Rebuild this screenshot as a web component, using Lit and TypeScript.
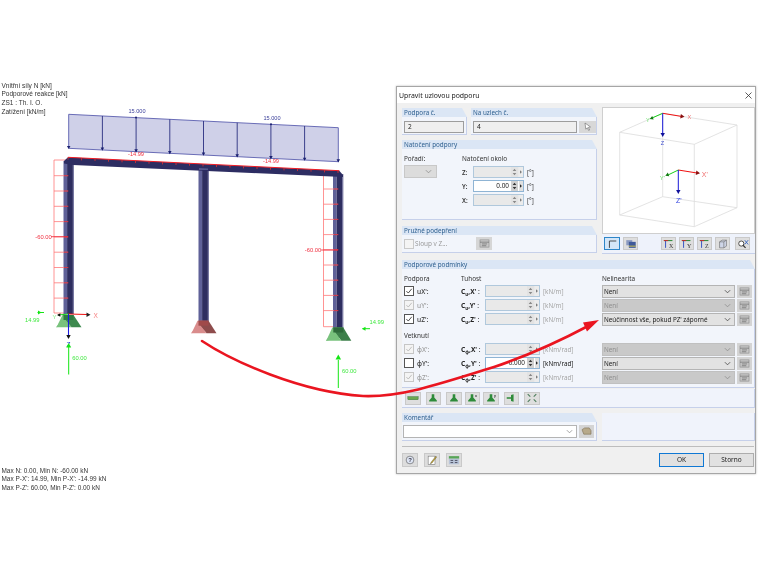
import { LitElement, html, css, svg, nothing } from "lit";
import { customElement } from "lit/decorators.js";

const gridIcon = html`<svg class="ico" viewBox="0 0 12 10"><rect x="1" y="1" width="10" height="8" fill="#c9c9c9" stroke="#8a8a8a" stroke-width=".7"/><path d="M1 3.5h10M3 5.5h6M3 7.5h5" stroke="#666" stroke-width=".8"/></svg>`;

const spinner = (on: boolean) => html`<span class="spin ${on ? "on" : ""}"><svg viewBox="0 0 7 11"><path d="M3.5 2 1.5 4.3h4zM3.5 9 1.5 6.7h4z" fill="${on ? "#333" : "#888"}"/></svg></span><span class="step ${on ? "on" : ""}"><svg viewBox="0 0 4 11"><path d="M1 3.6 3 5.5 1 7.4z" fill="${on ? "#222" : "#777"}"/></svg></span>`;

const num = (value: string, on: boolean, cls = "") => html`<span class="num ${on ? "on" : ""} ${cls}"><span class="numval">${value}</span>${spinner(on)}</span>`;

const chevron = (dim: boolean) => html`<svg class="chev" viewBox="0 0 8 5"><path d="M1 1 4 4 7 1" fill="none" stroke="${dim ? "#8c8c8c" : "#444"}" stroke-width=".9"/></svg>`;

const tool = (icon: unknown, extra = "") => html`<span class="tool ${extra}">${icon}</span>`;

const g = "#2e8b3a";
const support = (x = "") => html`<svg class="ico2" viewBox="0 0 14 11"><path d="M5.5 1h3v4l3 3.5v1h-9v-1l3-3.5z" fill="${g}"/>${x ? svg`<text x="10.5" y="4" font-size="4" font-weight="700" fill="#222" font-family="Liberation Sans">${x}</text>` : nothing}</svg>`;

type Row = { lab: string; state: "on" | "off" | "dim"; c: string; unit: string; val: string; sel: string; selOn: boolean; numOn?: boolean };

const trans: Row[] = [
  { lab: "uX':", state: "on", c: "u", unit: "[kN/m]", val: "", sel: "Není", selOn: true },
  { lab: "uY':", state: "dim", c: "u", unit: "[kN/m]", val: "", sel: "Není", selOn: false },
  { lab: "uZ':", state: "on", c: "u", unit: "[kN/m]", val: "", sel: "Neúčinnost vše, pokud PZ' záporné", selOn: true },
];
const rot: Row[] = [
  { lab: "φX':", state: "dim", c: "φ", unit: "[kNm/rad]", val: "", sel: "Není", selOn: false },
  { lab: "φY':", state: "off", c: "φ", unit: "[kNm/rad]", val: "0.000", sel: "Není", selOn: true, numOn: true },
  { lab: "φZ':", state: "dim", c: "φ", unit: "[kNm/rad]", val: "", sel: "Není", selOn: false },
];
const axes = ["X'", "Y'", "Z'"];

const box = (state: string) => html`<span class="cb ${state}">${state !== "off" ? html`<svg viewBox="0 0 9 9"><path d="M1.6 4.6 3.7 6.8 7.6 2" fill="none" stroke="currentColor" stroke-width=".9"/></svg>` : nothing}</span>`;

const rows = (list: Row[]) => list.map((r, i) => html`
  <span class="lab ${r.state === "dim" ? "dim" : ""}">${box(r.state)}<i>${r.lab}</i></span>
  <span class="cl"><b>C<sub>${r.c}</sub>,${axes[i]}</b> :</span>
  ${num(r.val, !!r.numOn, "wide")}
  <span class="unit ${r.numOn ? "" : "dim"}">${r.unit}</span>
  <span class="sel ${r.selOn ? "" : "off"}"><span>${r.sel}</span>${chevron(!r.selOn)}</span>
  <span class="mini">${gridIcon}</span>`);

function tri(x: number, y: number, dx: number, dy: number, s: number, fill: string) {
  const l = Math.hypot(dx, dy) || 1;
  const ux = dx / l, uy = dy / l;
  return svg`<path d="M${x} ${y}L${x - ux * s - uy * s * .55} ${y - uy * s + ux * s * .55}L${x - ux * s + uy * s * .55} ${y - uy * s - ux * s * .55}Z" fill="${fill}"/>`;
}
const label = (x: number, y: number, t: string, fill: string, anchor = "start", size = 6.2) =>
  svg`<text x="${x}" y="${y}" fill="${fill}" font-size="${size}" text-anchor="${anchor}" font-family="Liberation Sans, sans-serif">${t}</text>`;

function diagram() {
  const loadArrows = Array.from({ length: 9 }, (_, k) => {
    const x = 68.7 + 33.7 * k, t = 114.3 + k * 1.675, b = 148.3 + k * 1.675;
    return svg`${k > 0 && k < 8 ? svg`<path d="M${x} ${t}V${b}" stroke="#2a2f80" stroke-width=".9"/>` : nothing}${tri(x, b + .8, 0, 1, 3.2, "#1a2070")}`;
  });
  const beamTicks = Array.from({ length: 21 }, (_, k) => {
    const x = 68 + 13.5 * k, y = 157.5 + k * .668;
    return svg`<path d="M${x} ${y}v2.2" stroke="#e03030" stroke-width=".8"/>`;
  });
  const leftTicks = Array.from({ length: 9 }, (_, k) => 175.7 + 15.3 * k).map(y =>
    svg`<path d="M54 ${y}H68" stroke="#ff7878" stroke-width=".8"/><path d="M64 ${y}H68.5" stroke="#c92a3a" stroke-width=".8"/>`);
  const rightTicks = Array.from({ length: 9 }, (_, k) => 189 + 15.2 * k).map(y =>
    svg`<path d="M323.5 ${y}H338" stroke="#ff7878" stroke-width=".8"/><path d="M334 ${y}H338.5" stroke="#c92a3a" stroke-width=".8"/>`);
  const col = (x: number, y1: number, y2: number) => svg`
    <rect x="${x}" y="${y1}" width="3.6" height="${y2 - y1}" fill="#5f6198"/>
    <rect x="${x + 3.6}" y="${y1}" width="5.8" height="${y2 - y1}" fill="#2e2e60"/>
    <rect x="${x + 9.4}" y="${y1}" width=".9" height="${y2 - y1}" fill="#56578c"/>`;
  const sup = (cx: number, top: number, bot: number, lite: string, dark: string, mid: string) => svg`
    <path d="M${cx - 6} ${top}H${cx + 5}L${cx + 2} ${bot - 3}L${cx - 12} ${bot}Z" fill="${lite}"/>
    <path d="M${cx - 5} ${top}H${cx + 5}L${cx + 13} ${bot}H${cx + 3}L${cx - 3} ${top + 5}Z" fill="${dark}"/>
    <path d="M${cx - 12.5} ${bot}H${cx + 3}L${cx - 3} ${top + 5}H${cx - 6.5}Z" fill="${lite}"/>
    <rect x="${cx - 5}" y="${top}" width="10" height="5" fill="${mid}"/>`;
  return svg`
    <g>
      ${["Vnitřní síly N [kN]", "Podporové reakce [kN]", "ZS1 : Th. I. O.", "Zatížení [kN/m]"].map((t, i) => label(1.5, 87.8 + i * 8.65, t, "#333", "start", 6.5))}
      ${["Max N: 0.00, Min N: -60.00 kN", "Max P-X': 14.99, Min P-X': -14.99 kN", "Max P-Z': 60.00, Min P-Z': 0.00 kN"].map((t, i) => label(1.5, 472.5 + i * 8.55, t, "#333", "start", 6.45))}

      <path d="M68.7 114.3 338.3 127.7V161.7L68.7 148.3Z" fill="#cfd0e8" stroke="#5a5eaf" stroke-width=".9"/>
      ${loadArrows}
      <circle cx="136" cy="117.6" r="1" fill="#1a2070"/><circle cx="271" cy="124.3" r="1" fill="#1a2070"/>
      ${label(137, 113.2, "15.000", "#3a3f9a", "middle", 5.6)}${label(272, 120, "15.000", "#3a3f9a", "middle", 5.6)}

      <path d="M54 313V160H68M54 313H68" fill="none" stroke="#ff7878" stroke-width=".8"/>
      <path d="M323.5 326.7V173H339M323.5 326.7H338" fill="none" stroke="#ff7878" stroke-width=".8"/>
      ${col(63.5, 161, 314)}${col(198.5, 166, 321)}${col(333, 174, 328)}
      <path d="M68 157.3 339.3 170.7 343 175V177L73 165 64 163.5V161Z" fill="#2d2d62"/>
      <path d="M199 168 208 168.5V170L199 170Z" fill="#56578c"/>
      <path d="M68 157.3 339.3 170.7" stroke="#f01c24" stroke-width="1"/>
      ${beamTicks}${leftTicks}${rightTicks}
      <path d="M51 236.7H68M321 250H338" stroke="#f02030" stroke-width=".8"/>
      ${label(43.5, 238.8, "-60.00", "#f03040", "middle", 5.8)}${label(313, 252, "-60.00", "#f03040", "middle", 5.8)}
      ${label(136, 156.2, "-14.99", "#f03040", "middle", 5.6)}${label(271, 162.8, "-14.99", "#f03040", "middle", 5.6)}

      ${sup(68.5, 315, 327.3, "#79c27d", "#3d8a4e", "#2e7a42")}
      ${sup(203.5, 320.7, 333.3, "#d98c8c", "#8e4c4c", "#a04a4a")}
      ${sup(338.3, 327.5, 340.8, "#79c27d", "#3d7f4a", "#2e6a3a")}

      <path d="M68.5 314 58 315" stroke="#19d419" stroke-width="1.1"/>${tri(57, 315, -1, 0, 3.4, "#111")}
      <path d="M68.5 314 87 314.5" stroke="#f01010" stroke-width="1.1"/>${tri(90.5, 314.7, 1, 0, 4, "#222")}
      <path d="M68.5 314V336" stroke="#1a1ae0" stroke-width="1.1"/>${tri(68.5, 339, 0, 1, 4, "#111")}
      ${label(93.5, 317.5, "X", "#f68080", "start", 6.5)}${label(52.5, 319, "Y", "#80e880", "start", 6)}
      ${label(68.5, 346.5, "Z", "#2040d0", "middle", 6.5)}

      <path d="M68.7 374.5V347" stroke="#14e614" stroke-width="1"/>${tri(68.7, 343, 0, -1, 4.5, "#14e614")}
      <path d="M338.3 388V360" stroke="#14e614" stroke-width="1"/>${tri(338.3, 354.5, 0, -1, 5, "#14e614")}
      ${label(72.3, 359.5, "60.00", "#40e840", "start", 5.8)}${label(342, 373, "60.00", "#40e840", "start", 5.8)}
      <path d="M37.5 312.5H44" stroke="#14e614" stroke-width="1"/>${tri(41.5, 312.5, 1, 0, 3.5, "#14e614")}
      <path d="M362.5 328.7H370" stroke="#14e614" stroke-width="1"/>${tri(362, 328.7, -1, 0, 3.5, "#14e614")}
      ${label(25, 321.5, "14.99", "#40e840", "start", 5.8)}${label(369.5, 324.2, "14.99", "#40e840", "start", 5.8)}

      <path d="M202 341C232 361 300 392 363 396C400 397.5 440 384 494 367C530 355 560 341 590 325" fill="none" stroke="#ea1520" stroke-width="2.6" stroke-linecap="round"/>
      <path d="M599 320 587 331.5 583 322.5Z" fill="#ea1520"/>
    </g>`;
}

function preview() {
  const c = "#dcdcdc";
  return html`<svg class="pv" viewBox="602 107 152 128">
    <path d="M619.7 132.3 662.7 113.3 737 125 694.3 144.3ZM619.7 215 662.7 196.7 737 207.7 694.3 226.7ZM619.7 132.3V215M662.7 113.3V196.7M737 125V207.7M694.3 144.3V226.7" fill="none" stroke="${c}" stroke-width=".8"/>
    <path d="M662.7 113.3 682 116.5" stroke="#f01010" stroke-width="1"/>${tri(684.5, 116.8, 1, .15, 4, "#8a1010")}
    <path d="M662.7 113.3 652 118" stroke="#18d018" stroke-width="1"/>${tri(649.7, 119, -1, .4, 3.5, "#127a12")}
    <path d="M662.7 113.3V133" stroke="#1818d8" stroke-width="1"/>${tri(662.7, 137, 0, 1, 4, "#10109a")}
    ${label(687.5, 119, "X", "#f07070", "start", 5.5)}${label(646, 122, "Y", "#70e070", "start", 5.5)}${label(660.7, 145, "Z", "#4050d0", "start", 5.5)}
    <path d="M678.3 170 697 173" stroke="#f01010" stroke-width="1"/>${tri(700, 173.3, 1, .15, 4, "#8a1010")}
    <path d="M678.3 170 668 175" stroke="#18d018" stroke-width="1"/>${tri(665.3, 175.7, -1, .4, 3.5, "#127a12")}
    <path d="M678.3 170V190" stroke="#1818d8" stroke-width="1"/>${tri(678.3, 194, 0, 1, 4, "#10109a")}
    ${label(701.8, 176.5, "X'", "#f07070", "start", 7)}${label(659.8, 180, "Y'", "#70e070", "start", 6)}${label(676, 202.5, "Z'", "#3040e0", "start", 7)}
  </svg>`;
}

const axisIcon = (l: string) => html`<svg class="ico2" viewBox="0 0 14 11"><path d="M3 2V10" stroke="#2040c0" stroke-width="1"/><path d="M1 1.5H11" stroke="#2e8b3a" stroke-width="1.2"/><path d="M1 1.5H6" stroke="#c03030" stroke-width="1.2"/><text x="7" y="9.6" font-size="7" fill="#333" font-family="Liberation Serif">${l}</text></svg>`;

@customElement("app-root")
export class AppRoot extends LitElement {
  static styles = css`
    :host { display: block; position: relative; width: 760px; height: 570px; background: #fff; overflow: hidden;
      font-family: "Noto Sans", "Liberation Sans", sans-serif; font-size: 6.4px; color: #333; filter: blur(.3px); }
    .canvas { position: absolute; inset: 0; width: 760px; height: 570px; pointer-events: none; z-index: 2; }
    .dialog { position: absolute; left: 396px; top: 86px; width: 360px; height: 388px; box-sizing: border-box;
      background: #f0f0f0; border: 1px solid #a6a6a6; box-shadow: 0 0 2px #bbb; }
    .title { height: 16px; background: #fff; display: flex; align-items: center; justify-content: space-between; padding: 0 3px 0 2px; font-size: 6.9px; color: #222; }
    .title svg { width: 7px; height: 7px; }
    .body { padding: 5px 0 0 5px; }
    .top { display: flex; gap: 5px; height: 146px; }
    .leftcol { width: 195px; display: flex; flex-direction: column; }
    .row2 { display: flex; gap: 4px; height: 27px; }
    .group { display: flex; flex-direction: column; }
    .head { height: 9px; flex: none; background: #dbe6f5; clip-path: polygon(0 0, calc(100% - 5px) 0, 100% 100%, 0 100%); color: #2d5f8f; line-height: 9px; padding-left: 2px; font-size: 6.3px; white-space: nowrap; }
    .gbody { flex: 1; background: #f2f5fb; border-right: 1px solid #c6d0ea; border-bottom: 1px solid #c6d0ea; min-height: 0; }
    .g1 { width: 65px; } .g2 { flex: 1; }
    .inline { display: flex; align-items: center; padding: 2px 0 0 2px; gap: 2px; }
    .txt { height: 12px; box-sizing: border-box; border: 1px solid #9d9d9d; background: #efefef; padding-left: 3px; line-height: 10px; color: #222; font-size: 6.5px; }
    .g1 .txt { width: 60px; } .g2 .txt { width: 104px; }
    .pick { width: 17px; height: 12px; background: #d8d8d8; display: flex; align-items: center; justify-content: center; }
    .pick svg { width: 8px; height: 9px; }
    .natoc { height: 80px; margin-top: 5px; }
    .natbody { display: flex; padding: 5px 0 0 2px; }
    .ncol1 { width: 58px; }
    .ddsmall { width: 33px; height: 13px; box-sizing: border-box; margin-top: 2px; background: #dcdcdc; border: 1px solid #c8c8c8; display: flex; align-items: center; justify-content: flex-end; padding-right: 4px; }
    .nrows { display: grid; grid-template-columns: 11px 51px auto; grid-auto-rows: 14px; align-items: center; margin-top: 2px; }
    .ntitle { height: 9px; line-height: 9px; }
    .hline { height: 9px; line-height: 9px; }
    .axis { font-size: 6.2px; font-weight: 600; }
    .unitn { padding-left: 3px; font-size: 6.2px; }
    .pruz { height: 27px; margin-top: 6px; }
    .pruzb { display: flex; align-items: center; height: 18px; padding-left: 2px; color: #9a9a9a; }
    .pruzb .cb { margin-right: 1px; }
    .pruzb .slabel { width: 61px; }
    .bigbtn { width: 16px; height: 13px; background: #d6d6d6; display: flex; align-items: center; justify-content: center; }
    .rightcol { width: 153px; margin-top: -1px; display: flex; flex-direction: column; }
    .pvbox { height: 128px; box-sizing: border-box; background: #fff; border: 1px solid #cfcfcf; overflow: hidden; }
    .pv { display: block; width: 152px; height: 128px; margin: -1px; }
    .pvbar { height: 19px; background: #eef2fb; border-bottom: 1px solid #c6d0ea; display: flex; align-items: center; padding-left: 2px; }
    .tool { width: 15px; height: 13px; box-sizing: border-box; background: #dedede; border: 1px solid #c9c9c9; display: flex; align-items: center; justify-content: center; flex: none; }
    .tool.sel2 { background: #d3e6f8; border-color: #2e86c8; width: 16px; }
    .ico2 { width: 12px; height: 10px; }
    .sp3 { margin-left: 3px; } .sp23 { margin-left: 23px; } .sp5 { margin-left: 5px; }
    .cond { height: 128px; margin-top: 6px; width: 353px; }
    .grid { display: grid; grid-template-columns: 57px 24px 58px 59px 133px 17px; grid-template-rows: 12px repeat(3, 14px) 16px repeat(3, 14px); align-items: center; padding: 3px 0 0 2px; }
    .grid .hd { color: #333; }
    .vet { align-self: end; grid-column: 1 / -1; line-height: 10px; height: 11px; }
    .lab { display: flex; align-items: center; gap: 3px; font-size: 6.6px; }
    .lab i { font-style: normal; font-weight: 500; }
    .lab.dim { color: #9c9c9c; }
    .cb { width: 8px; height: 8px; border: 1px solid #555; background: #fff; display: inline-block; flex: none; color: #222; box-sizing: content-box; }
    .cb svg { display: block; width: 8px; height: 8px; }
    .cb.dim { border-color: #c6c6c6; color: #b0b0b0; background: #f4f4f4; }
    .pruzb .cb { border-color: #c9c9c9; background: #f4f4f4; }
    .cl { font-size: 6.6px; white-space: nowrap; }
    .cl b { font-weight: 700; color: #222; } .cl sub { font-size: 4.6px; line-height: 0; }
    .num { width: 51px; height: 12px; box-sizing: border-box; border: 1px solid #b0c8dc; background: #e9e9e9; display: flex; align-items: stretch; }
    .num.wide { width: 55px; }
    .num.on { background: #fff; border-color: #8fb4d4; }
    .numval { flex: 1; text-align: right; padding-right: 2px; line-height: 10px; font-size: 6.4px; color: #222; }
    .spin { width: 7px; background: #e3e3e3; display: block; }
    .spin.on { background: #d0d0d0; }
    .step { width: 4px; background: #ececec; margin-left: 1px; display: block; }
    .step.on { background: #e0e0e0; }
    .spin svg, .step svg { display: block; width: 100%; height: 100%; }
    .unit { font-size: 6.3px; color: #222; white-space: nowrap; }
    .unit.dim { color: #a6a6a6; }
    .sel { height: 13px; box-sizing: border-box; background: #e2e2e2; border: 1px solid #b4b4b4; display: flex; align-items: center; justify-content: space-between; padding: 0 3px 0 1px; color: #222; font-size: 6.3px; white-space: nowrap; }
    .sel.off { background: #c9c9c9; border-color: #c0c0c0; color: #8e8e8e; }
    .chev { width: 7px; height: 5px; flex: none; }
    .ddsmall .chev { width: 7px; }
    .mini { width: 15px; height: 13px; margin-left: 2px; background: #d4d4d4; display: flex; align-items: center; justify-content: center; }
    .ico { width: 11px; height: 9px; }
    .bar2 { height: 19px; margin-top: 1px; width: 353px; box-sizing: border-box; background: #f0f3fb; border-bottom: 1px solid #c6d0ea; border-right: 1px solid #c6d0ea; display: flex; align-items: center; padding-left: 3px; }
    .bar2 .tool { width: 15.5px; height: 13px; }
    .bottom { display: flex; gap: 5px; margin-top: 5px; height: 28px; }
    .cg { width: 195px; }
    .cbody { display: flex; align-items: center; gap: 2px; padding: 1px 0 0 1px; }
    .combo { width: 174px; height: 13px; box-sizing: border-box; background: #fff; border: 1px solid #b4b4b4; display: flex; align-items: center; justify-content: flex-end; padding-right: 3px; }
    .cright { width: 152px; background: #f0f3fb; border-right: 1px solid #c6d0ea; border-bottom: 1px solid #c6d0ea; }
    .sep { height: 1px; background: #bdbdbd; margin: 5px 1px 0 0; }
    .footer { display: flex; align-items: center; margin-top: 6px; height: 14px; padding-right: 1px; }
    .footer .tool { width: 16px; height: 14px; margin-right: 6px; background: #dddddd; }
    .spacer { flex: 1; }
    .btn { width: 45px; height: 14px; box-sizing: border-box; background: #e1e1e1; border: 1px solid #adadad; text-align: center; line-height: 12px; font-size: 6.5px; color: #222; }
    .btn.ok { border: 1px solid #0f78d4; margin-right: 5px; }
  `;

  render() {
    return html`
      <section class="dialog">
        <header class="title"><span>Upravit uzlovou podporu</span>
          <svg viewBox="0 0 7 7"><path d="M.5.5l6 6M6.5.5l-6 6" stroke="#333" stroke-width=".8"/></svg></header>
        <div class="body">
          <div class="top">
            <div class="leftcol">
              <div class="row2">
                <div class="group g1"><div class="head">Podpora č.</div><div class="gbody inline"><span class="txt">2</span></div></div>
                <div class="group g2"><div class="head">Na uzlech č.</div><div class="gbody inline"><span class="txt">4</span>
                  <span class="pick"><svg viewBox="0 0 8 9"><path d="M1 1 6.5 5 4.4 5.4 5.6 8 4.6 8.4 3.4 5.8 1.8 7.2Z" fill="#fff" stroke="#666" stroke-width=".6"/></svg></span></div></div>
              </div>
              <div class="group natoc">
                <div class="head">Natočení podpory</div>
                <div class="gbody natbody">
                  <div class="ncol1"><div class="hline">Pořadí:</div><div class="ddsmall">${chevron(true)}</div></div>
                  <div>
                    <div class="ntitle">Natočení okolo</div>
                    <div class="nrows">
                      <span class="axis">Z:</span>${num("", false)}<span class="unitn">[°]</span>
                      <span class="axis">Y:</span>${num("0.00", true)}<span class="unitn">[°]</span>
                      <span class="axis">X:</span>${num("", false)}<span class="unitn">[°]</span>
                    </div>
                  </div>
                </div>
              </div>
              <div class="group pruz">
                <div class="head">Pružné podepření</div>
                <div class="gbody pruzb"><span class="cb off"></span><span class="slabel">Sloup v Z...</span><span class="bigbtn">${gridIcon}</span></div>
              </div>
            </div>
            <div class="rightcol">
              <div class="pvbox">${preview()}</div>
              <div class="pvbar">
                ${tool(html`<svg class="ico2" viewBox="0 0 14 11"><path d="M4 2V10M4 2H12" stroke="#333" stroke-width="1"/></svg>`, "sel2")}
                ${tool(html`<svg class="ico2" viewBox="0 0 14 11"><rect x="1.5" y="1" width="7" height="6" fill="#8a9ac0"/><rect x="4.5" y="3" width="8" height="7" fill="#3f5a9a"/><path d="M4.5 8H12.5" stroke="#e2d040"/></svg>`, "sp3")}
                ${tool(axisIcon("X"), "sp23")}${tool(axisIcon("Y"), "sp3")}${tool(axisIcon("Z"), "sp3")}
                ${tool(html`<svg class="ico2" viewBox="0 0 14 11"><path d="M3 3 6 1H11V8L8 10H3ZM3 3H8V10M8 3 11 1" fill="#cfd6e8" stroke="#666" stroke-width=".7"/></svg>`, "sp3")}
                ${tool(html`<svg class="ico2" viewBox="0 0 14 11"><circle cx="5" cy="5" r="3" fill="#fff" stroke="#333"/><path d="M7 7 10 10" stroke="#333" stroke-width="1.4"/><path d="M9 1 13 6M13 1 9 6" stroke="#3060c0" stroke-width="1"/></svg>`, "sp5")}
              </div>
            </div>
          </div>
          <div class="group cond">
            <div class="head">Podporové podmínky</div>
            <div class="gbody grid">
              <span class="hd">Podpora</span><span class="hd" style="grid-column: span 3">Tuhost</span><span class="hd" style="grid-column: span 2">Nelinearita</span>
              ${rows(trans)}
              <span class="vet">Vetknutí</span>
              ${rows(rot)}
            </div>
          </div>
          <div class="bar2">
            ${tool(html`<svg class="ico2" viewBox="0 0 14 11"><rect x="1" y="4" width="12" height="3.5" fill="#6aa84f" stroke="#2e6b2e" stroke-width=".5"/></svg>`)}
            ${tool(support(), "sp5")}${tool(support(), "sp5")}${tool(support("x"), "sp3")}${tool(support("y"), "sp3")}
            ${tool(html`<svg class="ico2" viewBox="0 0 14 11"><path d="M2 4.5H7V2L10 1V10L7 9V6.5H2Z" fill="${g}"/></svg>`, "sp5")}
            ${tool(html`<svg class="ico2" viewBox="0 0 14 11"><path d="M2 1 5 4M12 1 9 4M2 10 5 7M12 10 9 7" stroke="#4a7a5a" stroke-width="1.2"/></svg>`, "sp5")}
          </div>
          <div class="bottom">
            <div class="group cg"><div class="head">Komentář</div>
              <div class="gbody cbody"><span class="combo">${chevron(true)}</span>
                <span class="mini" style="margin-left:0"><svg class="ico" viewBox="0 0 12 10"><path d="M1 3 4 1H9L11 4V8H3Z" fill="#b7a98a" stroke="#76674a" stroke-width=".6"/></svg></span></div></div>
            <div class="cright"></div>
          </div>
          <div class="sep"></div>
          <div class="footer">
            ${tool(html`<svg class="ico2" viewBox="0 0 14 11"><circle cx="7" cy="5.5" r="4.5" fill="#dfe6f5" stroke="#555" stroke-width=".7"/><text x="7" y="8" text-anchor="middle" font-size="7" font-weight="700" fill="#334" font-family="Liberation Sans">?</text></svg>`)}
            ${tool(html`<svg class="ico2" viewBox="0 0 14 11"><rect x="2.5" y="1" width="8" height="9.5" fill="#fff" stroke="#666" stroke-width=".6"/><path d="M11.5 1 6 8 5 10 7 9 12.5 2Z" fill="#c8a828" stroke="#333" stroke-width=".4"/></svg>`)}
            ${tool(html`<svg class="ico2" viewBox="0 0 14 11"><rect x="1" y="1" width="12" height="3" fill="#58a558"/><rect x="1" y="4" width="12" height="6.5" fill="#b8c4d8"/><path d="M3 6h3M8 6h3M3 8.5h3M8 8.5h3" stroke="#334" stroke-width=".9"/></svg>`)}
            <span class="spacer"></span>
            <span class="btn ok">OK</span><span class="btn">Storno</span>
          </div>
        </div>
      </section>
      <svg class="canvas" viewBox="0 0 760 570">${diagram()}</svg>
    `;
  }
}
